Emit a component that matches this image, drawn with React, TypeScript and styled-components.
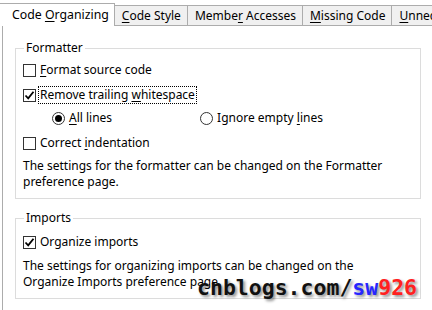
import React from "react";
import styled, { createGlobalStyle } from "styled-components";

const Global = createGlobalStyle`
  html, body { margin: 0; padding: 0; background: #ffffff; }
  body { font-family: "Noto Sans", "Segoe UI", sans-serif; font-size: 12px; color: #000; }
`;

const Root = styled.div`
  position: relative;
  width: 432px;
  height: 310px;
  overflow: hidden;
  background: #fff;
`;

const TabStrip = styled.div`
  display: flex;
  align-items: flex-end;
  height: 26px;
  box-sizing: border-box;
  padding-top: 3px;
  white-space: nowrap;
`;

const Tab = styled.div<{ $active?: boolean }>`
  flex: none;
  box-sizing: border-box;
  padding: ${(p) => (p.$active ? "3px 5px 4px 12px" : "2px 6px 2px 7px")};
  height: ${(p) => (p.$active ? "23px" : "21px")};
  background: ${(p) => (p.$active ? "#ffffff" : "#f0f0f0")};
  border-top: 1px solid #acacac;
  border-right: 1px solid #acacac;
  border-bottom: ${(p) => (p.$active ? "none" : "1px solid #acacac")};
  font-size: ${(p) => (p.$active ? "12.3px" : "12px")};
  line-height: 16px;
`;

const U = styled.span`
  text-decoration: underline;
  text-underline-offset: 2px;
`;

const Pane = styled.div`
  margin-left: 2px;
  border-left: 1px solid #acacac;
  height: 284px;
  box-sizing: border-box;
  padding: 14px 0 0 12px;
`;

const Group = styled.fieldset<{ $gap?: number }>`
  width: 406px;
  box-sizing: border-box;
  margin: ${(p) => p.$gap ?? 0}px 0 0 0;
  padding: 0 6px 8px 7px;
  border: 1px solid #dcdcdc;
  min-width: 0;
`;

const Legend = styled.legend`
  padding: 0 2px;
  margin-left: 1px;
  line-height: 16px;
  font-size: 12px;
`;

const Row = styled.div<{ $top: number }>`
  display: flex;
  align-items: center;
  height: 16px;
  margin-top: ${(p) => p.$top}px;
`;

const Option = styled.label`
  display: flex;
  align-items: center;
  gap: 3px;
  line-height: 16px;
`;

const Box = styled.span`
  flex: none;
  width: 13px;
  height: 13px;
  box-sizing: border-box;
  border: 1px solid #333333;
  background: #fff;
  display: flex;
  align-items: center;
  justify-content: center;
`;

const Radio = styled.span<{ $on?: boolean }>`
  flex: none;
  width: 13px;
  height: 13px;
  box-sizing: border-box;
  border: 1px solid #333333;
  border-radius: 50%;
  background: #fff;
  display: flex;
  align-items: center;
  justify-content: center;
  &::after {
    content: "";
    display: ${(p) => (p.$on ? "block" : "none")};
    width: 7px;
    height: 7px;
    border-radius: 50%;
    background: #000;
  }
`;

const Label = styled.span<{ $focus?: boolean }>`
  padding: 0 1px;
  outline: ${(p) => (p.$focus ? "1px dotted #000" : "none")};
  outline-offset: 0;
`;

const Radios = styled.div`
  display: flex;
  align-items: center;
  margin-top: 7px;
  margin-left: 29px;
  height: 16px;
  gap: 87px;
`;

const Desc = styled.p<{ $top: number }>`
  margin: ${(p) => p.$top}px 0 0 0;
  line-height: 16px;
  font-size: 12px;
  width: 380px;
`;

const Watermark = styled.div`
  position: absolute;
  left: 197px;
  top: 275px;
  font-family: "DejaVu Sans Mono", "Liberation Mono", monospace;
  font-weight: bold;
  font-size: 21.5px;
  line-height: 26px;
  color: #111;
  text-shadow: 2px 2px 3px rgba(0, 0, 0, 0.45);
  white-space: nowrap;
`;

const Blue = styled.span`
  color: #2626ff;
`;
const Red = styled.span`
  color: #ff2020;
`;

const Check = () => (
  <svg width="11" height="11" viewBox="0 0 11 11">
    <path d="M1.5 5.5 L4.2 8.4 L9.5 1.8" fill="none" stroke="#000" strokeWidth="1.8" />
  </svg>
);

export default function App() {
  return (
    <Root>
      <Global />
      <TabStrip>
        <Tab $active>
          Code <U>O</U>rganizing
        </Tab>
        <Tab>
          <U>C</U>ode Style
        </Tab>
        <Tab>
          Membe<U>r</U> Accesses
        </Tab>
        <Tab>
          <U>M</U>issing Code
        </Tab>
        <Tab>
          <U>U</U>nnecessary Code
        </Tab>
      </TabStrip>
      <Pane>
        <Group>
          <Legend>Formatter</Legend>
          <Row $top={6}>
            <Option>
              <Box />
              <Label>
                <U>F</U>ormat source code
              </Label>
            </Option>
          </Row>
          <Row $top={9}>
            <Option>
              <Box>
                <Check />
              </Box>
              <Label $focus>
                Remove trailing <U>w</U>hitespace
              </Label>
            </Option>
          </Row>
          <Radios>
            <Option>
              <Radio $on />
              <Label>
                <U>A</U>ll lines
              </Label>
            </Option>
            <Option>
              <Radio />
              <Label>
                Ignore empty <U>l</U>ines
              </Label>
            </Option>
          </Radios>
          <Row $top={9}>
            <Option>
              <Box />
              <Label>
                Correct <U>i</U>ndentation
              </Label>
            </Option>
          </Row>
          <Desc $top={7}>
            The settings for the formatter can be changed on the Formatter preference page.
          </Desc>
        </Group>
        <Group $gap={11}>
          <Legend>Imports</Legend>
          <Row $top={8}>
            <Option>
              <Box>
                <Check />
              </Box>
              <Label>Organize imports</Label>
            </Option>
          </Row>
          <Desc $top={8}>
            The settings for organizing imports can be changed on the Organize Imports preference page.
          </Desc>
        </Group>
      </Pane>
      <Watermark>
        cnblogs.com/<Blue>sw</Blue>
        <Red>926</Red>
      </Watermark>
    </Root>
  );
}
